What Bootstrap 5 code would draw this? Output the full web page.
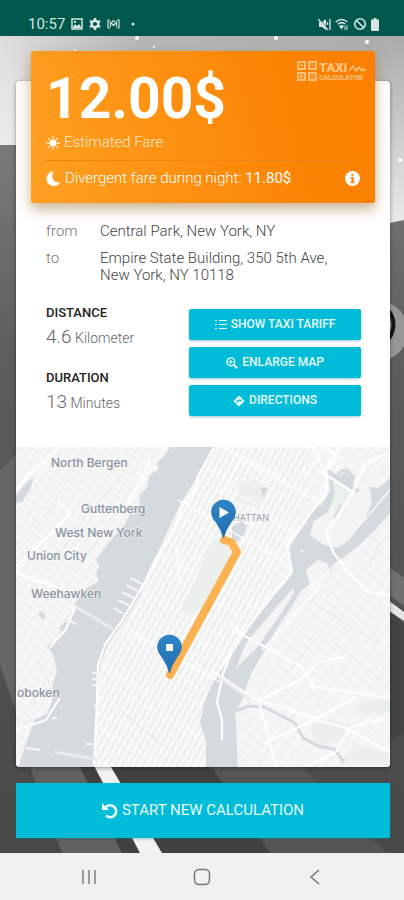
<!DOCTYPE html>
<html lang="en">
<head>
<meta charset="utf-8">
<meta name="viewport" content="width=device-width, initial-scale=1">
<title>Taxi Calculator</title>
<link href="https://cdn.jsdelivr.net/npm/bootstrap@5.3.0/dist/css/bootstrap.min.css" rel="stylesheet">
<style>
  body { font-family: Roboto, "Liberation Sans", sans-serif; font-weight: 300; font-size: 15px; line-height: 17px; color: #444; background: #4b4b4b; }
  svg { display: block; flex-shrink: 0; }
  .status { background: #00574b; color: #d5e6e3; height: 36px; padding: 12px 25px 0 28px; font-size: 15px; font-weight: 400; }
  .status-apps { gap: 6px; }
  .stage { padding: 45px 14px 15px 16px; }
  .backdrop { inset: 0; width: 100%; height: 100%; z-index: -1; }
  .fare-card { display: flow-root; border-radius: 4px; box-shadow: 0 1px 4px rgba(0,0,0,.4); }
  .fare-head { margin: -30px 15px 0; padding: 20px 15px 16px; border-radius: 2px; color: #fff; background: linear-gradient(75deg, #ffa021, #fb8304 75%, #fb7f02); box-shadow: 0 6px 14px rgba(140,80,0,.45); }
  .fare-price { font-size: 57px; line-height: 56px; font-weight: 700; }
  .fare-kind { color: #ffe9cc; margin-top: 7px; }
  .fare-rule { border-top: 1px solid #ec8410; margin: 9px 0; }
  .brand { top: 10px; right: 8px; }
  .details { padding: 20px 29px 31px 30px; }
  .route { display: grid; grid-template-columns: 54px 1fr; row-gap: 10px; }
  .route dt { font-weight: 300; color: #777; }
  .route dd { padding-right: 20px; }
  .facts { display: grid; grid-template-columns: 5fr 6fr; margin-top: 21px; }
  .facts h2 { font-size: 13px; line-height: 16px; font-weight: 500; color: #222; margin: 0 0 6px; }
  .facts p { font-size: 14px; line-height: 20px; margin: 0 0 22px; color: #666; }
  .facts p span { font-size: 19px; }
  .tools { gap: 7px; }
  .btn-aqua { --bs-btn-color: #e9fbfe; --bs-btn-bg: #00bcd8; --bs-btn-border-color: #00bcd8; --bs-btn-hover-bg: #00a9c3; --bs-btn-hover-color: #fff; --bs-btn-border-radius: 2px; font-weight: 500; box-shadow: 0 1px 3px rgba(0,120,140,.4); }
  .btn-tool { font-size: 12px; line-height: 15px; padding: 7px 4px; }
  .btn-start { margin-top: 16px; padding: 16px; font-size: 15px; line-height: 21px; font-weight: 400; border-radius: 0; }
  .map-view { width: 100%; height: auto; border-radius: 0 0 4px 4px; }
  .map-view text { font-family: Inter, "Open Sans", sans-serif; font-size: 12px; font-weight: 500; fill: #8b93a3; stroke: #f5f6f6; stroke-width: 1px; paint-order: stroke; }
  .map-view .district { font-size: 9px; font-weight: 400; fill: #9aa0a8; }
  .sys-nav { background: #f0f0f0; height: 47px; }
  .sys-nav button { flex: 1 1 0; max-width: 113px; color: #777; }
</style>
<script src="https://cdn.jsdelivr.net/npm/bootstrap@5.3.0/dist/js/bootstrap.bundle.min.js"></script>
</head>
<body>
<div class="d-flex flex-column min-vh-100">

<header class="status d-flex align-items-center">
  <div class="status-apps d-flex align-items-center">
    <span>10:57</span>
    <svg width="12" height="12" viewBox="0 0 12 12"><path fill="none" stroke="currentColor" stroke-width="1.5" d="M1 1h10v10H1z"/><path fill="currentColor" d="M2 9l2-3 2 2 2-2 2 3v1H2zM3 3h2v2H3z"/></svg>
    <svg width="12" height="12" viewBox="0 0 12 12"><circle cx="6" cy="6" r="3.3" fill="none" stroke="currentColor" stroke-width="2.4"/><path stroke="currentColor" stroke-width="2.4" d="M6 0v2M6 10v2M.8 3l1.8 1M9.4 8l1.8 1M.8 9l1.8-1M9.4 4l1.8-1"/></svg>
    <svg width="13" height="10" viewBox="0 0 13 10"><path fill="none" stroke="currentColor" stroke-width="1.2" d="M3 1H1v8h2M10 1h2v8h-2M3.5 8V3l3 3.5 3-3.5v5M5 1.5L6.500 3 8 1.500"/></svg>
    <svg width="14" height="4" viewBox="0 0 14 4"><circle cx="7" cy="2" r="1.5" fill="currentColor"/></svg>
  </div>
  <svg width="13" height="13" viewBox="0 0 13 13" class="ms-auto me-1"><path fill="currentColor" d="M1 4h3l4-3v11L4 9H1z"/><path stroke="#00574b" stroke-width="1" d="M1 1l9 10"/><path stroke="currentColor" stroke-width="1.3" d="M0 1l10 11M9.500 4v3M12 1v11"/></svg>
  <svg width="14" height="13" viewBox="0 0 14 13" class="me-1"><path fill="none" stroke="currentColor" stroke-width="1.5" d="M.7 4Q6.500-1 12.300 4M2.800 6.200Q6.500 3 10.200 6.200"/><path fill="currentColor" d="M4 8q2.500-2 5 0l-2.500 3.500z"/><path stroke="currentColor" d="M10 8v4M12 7v5"/></svg>
  <svg width="14" height="14" viewBox="0 0 14 14" class="me-1"><circle cx="7" cy="7" r="5.3" fill="none" stroke="currentColor" stroke-width="1.6"/><path stroke="currentColor" stroke-width="1.6" d="M3.300 3.300l7.400 7.400"/></svg>
  <svg width="8" height="13" viewBox="0 0 8 13"><path fill="currentColor" d="M2.500 0h3v1.500H8V12q0 1-1 1H1q-1 0-1-1V1.500h2.500z"/></svg>
</header>

<main class="stage position-relative z-0 flex-grow-1">
  <svg class="backdrop position-absolute" viewBox="0 36 404 817" preserveAspectRatio="none" aria-hidden="true">
    <defs>
      <linearGradient id="sky"><stop offset="0" stop-color="#dedede"/><stop offset=".35" stop-color="#b4b4b4"/><stop offset="1" stop-color="#ababab"/></linearGradient>
      <linearGradient id="haze" x2="0" y2="1"><stop offset="0" stop-color="#fff" stop-opacity="0"/><stop offset="1" stop-color="#fff" stop-opacity=".75"/></linearGradient>
      <linearGradient id="road" x2="0" y2="1"><stop offset="0" stop-color="#7a7a7a"/><stop offset=".3" stop-color="#5d5d5d"/><stop offset="1" stop-color="#484848"/></linearGradient>
    </defs>
    <path fill="url(#sky)" d="M0 36h404v200H0z"/>
    <path fill="url(#haze)" d="M0 36h404v190H0z"/>
    <path fill="url(#road)" d="M0 145h200L380 225l24-5v633H0z"/>
    <path fill="#676767" d="M0 470l30-28v310L0 665z"/>
    <circle cx="378" cy="331" r="30" fill="#969696"/>
    <path fill="none" stroke="#151515" stroke-width="4" d="M388 310q11 14 0 30"/>
    <path fill="#707070" d="M380 560l24 18v28l-24-18z"/>
    <path fill="#444" d="M380 600l24 24v110l-24 10z"/>
    <path fill="#e6e6e6" d="M380 594l24 18v9l-24-16z"/>
    <path fill="#606060" d="M30 767h50l42 86H62z"/>
    <path fill="#414141" d="M80 767h14l45 86h-17zM109 767h105l60 86H161z"/>
    <path fill="#555" d="M212 767h90l85 86H270z"/>
    <path fill="#f2f2f2" d="M92 762h16l54 91h-22z"/>
    <g fill="#fff"><circle cx="137" cy="38" r="2"/><circle cx="276" cy="38" r="2"/><circle cx="367" cy="42" r="2"/><circle cx="154" cy="47" r="1"/><circle cx="75" cy="50" r="1"/><circle cx="400" cy="160" r="2"/></g>
  </svg>

  <section class="fare-card bg-white">
    <div class="fare-head position-relative">
      <svg class="brand position-absolute" width="70" height="22" viewBox="0 0 70 22" role="img" aria-label="Taxi Calculator">
        <g fill="none" stroke="#ffc27c" stroke-width="1.8"><path d="M1 1h7v7H1zM12 1h7v7h-7zM1 12h7v7H1zM12 12h7v7h-7z"/><path stroke-width="1.2" d="M3 4.500h3M4.500 3v3M14 4.500h3M3 14l3 3M6 14l-3 3M14 14.500h3M14 16.500h3"/><path stroke-width="1.5" d="M52 10l4-5 3 5 3-4 3 4 2-2 2 2"/></g>
        <text x="22" y="11" font-family="Roboto" font-size="13" font-weight="900" fill="#ffc27c">TAXI</text>
        <text x="22" y="19" font-family="Roboto" font-size="7" font-weight="900" fill="#ffc27c">CALCULATOR</text>
      </svg>
      <div class="fare-price">12.00$</div>
      <div class="fare-kind d-flex align-items-center">
        <svg width="14" height="14" viewBox="0 0 14 14" class="me-1"><path stroke="#ffe3bd" stroke-width="1.400" d="M7 0v14M0 7h14M2 2l10 10M12 2L2 12"/><circle cx="7" cy="7" r="3.200" fill="#fff"/></svg>
        Estimated Fare
      </div>
      <div class="fare-rule"></div>
      <div class="d-flex align-items-center">
        <svg width="15" height="17" viewBox="0 0 15 17" class="me-1"><path fill="#fff" d="M7 1Q.5 3 .5 8.500.8 16 8 16q4 0 6-3.500Q8 13 6.500 8 6 4 7 1z"/></svg>
        <span>Divergent fare during night: <span class="fw-normal">11.80$</span></span>
        <button type="button" class="btn p-0 border-0 ms-auto" aria-label="Fare information">
          <svg width="15" height="15" viewBox="0 0 15 15"><circle cx="7.500" cy="7.500" r="7.500" fill="#fff"/><path fill="#f98a12" d="M6.300 2.800h2.400v2H6.300zM5.500 6h3.200v4.500h1V12H5.500v-1.500h.9v-3h-.9z"/></svg>
        </button>
      </div>
    </div>

    <div class="details">
      <dl class="route mb-0">
        <dt>from</dt><dd class="mb-0">Central Park, New York, NY</dd>
        <dt>to</dt><dd class="mb-0">Empire State Building, 350 5th Ave, New York, NY 10118</dd>
      </dl>
      <div class="facts">
        <div>
          <h2>DISTANCE</h2>
          <p><span>4.6</span> Kilometer</p>
          <h2>DURATION</h2>
          <p class="mb-0"><span>13</span> Minutes</p>
        </div>
        <div class="tools d-grid align-content-start pt-1">
          <button type="button" class="btn btn-aqua btn-tool d-flex align-items-center justify-content-center gap-1"><svg width="12" height="11" viewBox="0 0 12 11"><path stroke="currentColor" stroke-width="1.200" d="M0 1.500h2M0 5.500h2M0 9.500h2M4 1.500h8M4 5.500h8M4 9.500h8"/></svg>SHOW TAXI TARIFF</button>
          <button type="button" class="btn btn-aqua btn-tool d-flex align-items-center justify-content-center gap-1"><svg width="12" height="12" viewBox="0 0 12 12"><circle cx="4.800" cy="4.800" r="3.900" fill="none" stroke="currentColor" stroke-width="1.400"/><path stroke="currentColor" stroke-width="1.200" d="M2.800 4.800h4M4.800 2.800v4"/><path stroke="currentColor" stroke-width="2" d="M7.800 7.800l3.400 3.400"/></svg>ENLARGE MAP</button>
          <button type="button" class="btn btn-aqua btn-tool d-flex align-items-center justify-content-center gap-1"><svg width="12" height="12" viewBox="0 0 12 12"><path fill="currentColor" d="M6 .5L11.500 6 6 11.500.5 6z"/><path fill="none" stroke="#00bcd8" d="M4 8V5.500h4M6.500 4L8 5.500 6.500 7"/></svg>DIRECTIONS</button>
        </div>
      </div>
    </div>

    <svg class="map-view" viewBox="16 447 374 320" role="img" aria-label="Route map from Central Park to the Empire State Building">
      <defs>
        <pattern id="avenues" width="6" height="14" patternUnits="userSpaceOnUse" patternTransform="rotate(29)"><path fill="none" stroke="#fff" stroke-width="1.200" d="M1 0v14M0 1h6"/><path stroke="#e6e7e7" stroke-width=".7" d="M4 0v14"/></pattern>
        <pattern id="blocks" width="9" height="7" patternUnits="userSpaceOnUse" patternTransform="rotate(34)"><path fill="none" stroke="#fbfbfb" stroke-width="1" d="M1 0v7M0 1h9"/><path stroke="#e9eaea" stroke-width=".6" d="M5 0v7"/></pattern>
        <pattern id="lanes" width="11" height="8" patternUnits="userSpaceOnUse" patternTransform="rotate(37)"><path fill="none" stroke="#fafafa" stroke-width="1" d="M1 0v8M0 1h11"/><path stroke="#ebecec" stroke-width=".6" d="M6 0v8"/></pattern>
        <linearGradient id="pin" x2="0" y2="1"><stop offset="0" stop-color="#2e86c8"/><stop offset="1" stop-color="#226eae"/></linearGradient>
      </defs>
      <path fill="#f3f4f4" d="M16 447h374v320H16z"/>
      <path fill="url(#blocks)" d="M16 447h160L20 767h-4z"/>
      <path fill="url(#avenues)" d="M213 447h110L205 767H94l5-100z"/>
      <path fill="url(#lanes)" d="M310 447h80v320H230z"/>
      <path fill="#ebf0ed" d="M240 482l18-2 10 12-8 16-24-6zM212 540l14-4 12 14-28 48-16 18-14-4 16-34zM310 725l20-6 22 6-14 18-24 2zM354 745l34 8v12h-50zM360 702l30-4v14l-36 4z"/>
      <g fill="#d4dadd">
        <path d="M170 447l-5 8-8 8 2 6-10 7-2 12-8 8 1 9-7 3-8 16-18 21-11 15 3 6-3 8 3 7-12 7-12 15-4 15-10 7-3 13-11 8 6 8 4 17-4 12-1 18-4 12-14 7L24 750 18 767H94l1-32 2-35 3-35 8-20 17-25 15-25 10-25 18-40 12-25 15-25 18-33z"/>
        <path d="M16 495l12-14 6-3-4 12-8 12-6 1zM38 613l5-2 3 5-4 4z"/>
        <path d="M313 447L326 468 340 476 348 470 355 476 353 484 362 492 372 487 378 488 390 478V513L375 530 360 545 340 560 330 572 312 582 300 592 294 603 276 630 262 655 252 672 245 690 241 702 235 712 236 725 238 767H206V742L200 722 205 700 213 682 230 658 238 642 254 620 272 598 288 580 292 568 288 552 292 543 302 528 313 511 325 500 330 490 328 470z"/>
        <path d="M232 527l10-6 5 5-3 9-8 8-4-4zM260 488l8-1-4 10z"/>
      </g>
      <path fill="#f3f5f4" d="M333 478l20 13 5 1 12-4 2 16-9 18-14 18-11 8-14-3-14-10 4-14 14-9 7-17zM306 570l12-10 9 3 3 8-10 10-10 4zM236 668l10-25 40-47 8-8 0 4-13 22-26 36z"/>
      <path fill="#ebf1ed" d="M333 480l14 8 3 10-12 16-8-4 5-18z"/>
      <path fill="none" stroke="#d4dadd" stroke-width="2" d="M334 518l7-14M353 540l10-18"/>
      <circle cx="302" cy="551" r="1.500" fill="#f5f6f6"/>
      <path fill="none" stroke="#d4dadd" stroke-width="3" d="M236 711l12-5 16 1 18 9 13 7 8 15 15 8 16 3 10 13M338 475q5-8 12-3"/>
      <g fill="none" stroke="#fff" stroke-width="2.200" stroke-linejoin="round">
        <path d="M213 449l-15 27-3 13-13 17-8 25-17 25-12 26-22 37-18 26-7 20-1 36-3 65"/>
        <path d="M313 447l14 29-1 17-11 14-12 17-16 20 5 28-17 20-26 34-18 28-8 20-6 28 5 18v20"/>
        <path d="M390 452l-25 12-13 30-26 40 8 20 20 24 14 13 22 5M318 470l35 22M340 447l-16 25M325 447l12 11-10 12"/>
        <path d="M232 629l70 38 10 16 3 7M214 672l42 28 25 6 36 14 29 8 44 24M260 700l40-20 20-18 30-7M310 686l80 12M258 700l6 20 12 47M264 743l40-18 52-28M305 767l30-14 16-26 39-10"/>
        <path d="M16 573l40 14 12 10M16 490l12-14 22-20 10-9M150 461l-10 20-20 35M76 605l-10 24-16 18M16 730l30-10 14-22M58 500l12 14-30 30-24 23"/>
        <path stroke-width="1.200" d="M243 455l-18 34 30 14M222 447l100 58M178 500l112 66M130 630l90 52M177 545l2 35M390 490l-30 35M340 560l-30 28M262 650l60-66"/>
      </g>
      <g fill="none" stroke="#dfe1e2" stroke-width=".8"><path d="M88 447l-25 40-15 25-30 40M128 470l-44 48-40 60M108 530l-40 45M330 590l50 50M340 610l-50 60M310 600l70 45M16 682l20 18-14 30M38 660l14 30M120 710l60 50M330 640l52 40M360 530l20 13-10 20"/></g>
      <path fill="none" stroke="#f6f7f7" stroke-width="2" d="M130 578l12 6M126 585l12 6M122 592l12 6M118 600l12 6M114 608l10 6M92 673l10 1M92 679l10 1M92 685l10 1M94 706l6 1M68 620l8 4M54 628l10 6M52 718l5 0M85 744h8M26 748l14 2"/>
      <path fill="none" stroke="#e9ecec" stroke-width="3" d="M76 607l40 24M54 752l42 7M217 676l33 23"/>
      <text x="51" y="467">North Bergen</text>
      <text x="81" y="513">Guttenberg</text>
      <text x="55" y="537">West New York</text>
      <text x="27" y="560">Union City</text>
      <text x="31" y="598">Weehawken</text>
      <text x="17" y="697">oboken</text>
      <text x="212" y="521" class="district">MANHATTAN</text>
      <path fill="none" stroke="#fdb252" stroke-width="8" stroke-linecap="round" stroke-linejoin="round" d="M224 540l7 2 6 10-67 123"/>
      <path fill="url(#pin)" stroke="#1f69a6" stroke-width=".6" d="M223.500 538q-2-8-7-15-5-6-5-11a12 12 0 0 1 24 0q0 5-5 11-5 7-7 15z"/><path fill="#fff" d="M219.500 507v11l9.500-5.500z"/>
      <path fill="url(#pin)" stroke="#1f69a6" stroke-width=".6" d="M169.500 673q-2-8-7-15-5-6-5-11a12 12 0 0 1 24 0q0 5-5 11-5 7-7 15z"/><path fill="#fff" d="M166 644h7v7h-7z"/>
    </svg>
  </section>

  <button type="button" class="btn btn-aqua btn-start w-100 d-flex align-items-center justify-content-center gap-1"><svg width="16" height="16" viewBox="0 0 16 16"><path fill="none" stroke="currentColor" stroke-width="2.600" d="M3.500 4.500A6 6 0 1 1 4 12.500"/><path fill="currentColor" d="M0 0l7 7H0z"/></svg>START NEW CALCULATION</button>
</main>

<nav class="sys-nav d-flex justify-content-center" aria-label="System">
  <button type="button" class="btn border-0 p-0 d-flex align-items-center justify-content-center" aria-label="Recent apps"><svg width="16" height="16" viewBox="0 0 16 16"><path stroke="currentColor" stroke-width="1.400" d="M2 1v14M8 1v14M14 1v14"/></svg></button>
  <button type="button" class="btn border-0 p-0 d-flex align-items-center justify-content-center" aria-label="Home"><svg width="18" height="18" viewBox="0 0 18 18"><rect x="1.500" y="1.500" width="15" height="15" rx="4.500" fill="none" stroke="currentColor" stroke-width="1.500"/></svg></button>
  <button type="button" class="btn border-0 p-0 d-flex align-items-center justify-content-center" aria-label="Back"><svg width="16" height="16" viewBox="0 0 16 16"><path fill="none" stroke="currentColor" stroke-width="1.500" d="M12 1L4 8l8 7"/></svg></button>
</nav>
</div>
</body>
</html>
